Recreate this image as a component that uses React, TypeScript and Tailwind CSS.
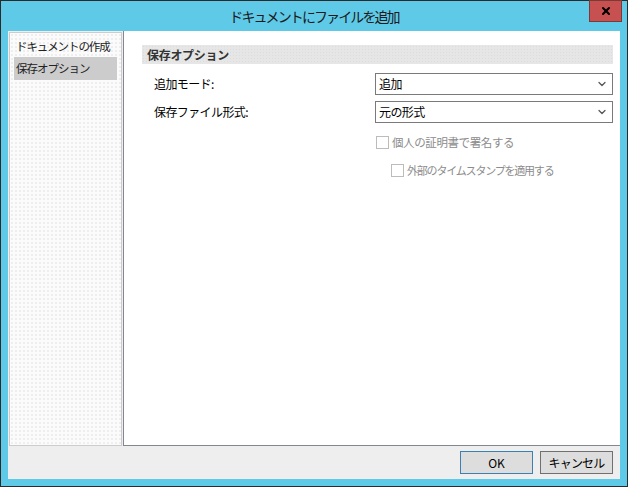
import { ChevronDown, X } from 'lucide-react';

const dots = {
  backgroundImage: 'radial-gradient(#e6e6e6 0.6px, transparent 0.9px)',
  backgroundSize: '4px 4px',
};

function Select({ value }: { value: string }) {
  return (
    <div className="flex h-[22px] w-[238px] items-center justify-between border border-[#7a7a7a] bg-white pl-[3px] pr-[4px] text-[12px] tracking-[-0.6px] text-black">
      <span>{value}</span>
      <ChevronDown className="h-3 w-3 text-[#555]" strokeWidth={2.5} />
    </div>
  );
}

function Check({ label, tight }: { label: string; tight?: boolean }) {
  return (
    <div className={`flex h-[14px] items-center gap-[3px] leading-[14px] text-[#8c8c8c] ${tight ? 'text-[11px] tracking-[-1.2px]' : 'text-[11.5px] tracking-[-0.4px]'}`}>
      <span className="h-[13px] w-[13px] border border-[#bcbcbc] bg-white" />
      <span>{label}</span>
    </div>
  );
}

export default function App() {
  return (
    <div
      className="flex h-[487px] w-[628px] flex-col border border-[#2b2b2b] bg-[#5fc9e8]"
      style={{ fontFamily: '"Noto Sans CJK JP", "Noto Sans", sans-serif' }}
    >
      <div className="relative flex h-[30px] items-center justify-center">
        <span className="text-[14px] tracking-[-1.9px] text-[#1a1a1a]">ドキュメントにファイルを追加</span>
        <button className="absolute right-[5px] top-[-1px] flex h-[22px] w-[33px] items-center justify-center border border-[#7a3a36] bg-[#c75050]">
          <X className="h-3 w-3 text-black" strokeWidth={4} />
        </button>
      </div>
      <div className="mx-[7px] mb-[7px] flex flex-1 flex-col bg-[#eeeeee]">
        <div className="flex h-[415px]">
          <div className="ml-px mt-px w-[113px] border border-[#cccccc] bg-[#fbfbfb] px-[4px] pt-[3px]" style={dots}>
            <div className="h-[20px] px-[2px] text-[11.5px] leading-[20px] tracking-[-1.1px] whitespace-nowrap text-[#222]">ドキュメントの作成</div>
            <div className="mt-[1px] h-[23px] bg-[#cccccc] px-[2px] text-[11.5px] leading-[23px] tracking-[-1px] text-[#222]">保存オプション</div>
          </div>
          <div className="ml-px flex-1 border-l border-b border-[#828790] bg-white pl-[18px] pr-[7px] pt-[14px]">
            <div className="flex h-[19px] items-center bg-[#e6e6e6] pl-[5px] text-[12px] font-bold tracking-[-0.3px] text-[#333]" style={{ backgroundImage: 'radial-gradient(#dcdcdc 0.6px, transparent 0.9px)', backgroundSize: '3px 3px' }}>
              保存オプション
            </div>
            <div className="mt-[9px] flex items-center justify-between pl-[12px]">
              <span className="text-[12px] tracking-[-0.6px] text-black">追加モード:</span>
              <Select value="追加" />
            </div>
            <div className="mt-[6px] flex items-center justify-between pl-[12px]">
              <span className="text-[12px] tracking-[-0.6px] text-black">保存ファイル形式:</span>
              <Select value="元の形式" />
            </div>
            <div className="ml-[234px] mt-[12px] flex flex-col gap-[14px]">
              <Check label="個人の証明書で署名する" />
              <div className="pl-[15px]">
                <Check label="外部のタイムスタンプを適用する" tight />
              </div>
            </div>
          </div>
        </div>
        <div className="flex flex-1 items-center justify-end gap-[7px] pr-[7px]">
          <button className="h-[23px] w-[73px] border border-[#3c7fb1] bg-[#dddddd] text-[12px] text-black">OK</button>
          <button className="h-[23px] w-[73px] border border-[#707070] bg-[#dddddd] text-[12px] tracking-[-0.8px] text-black">キャンセル</button>
        </div>
      </div>
    </div>
  );
}
